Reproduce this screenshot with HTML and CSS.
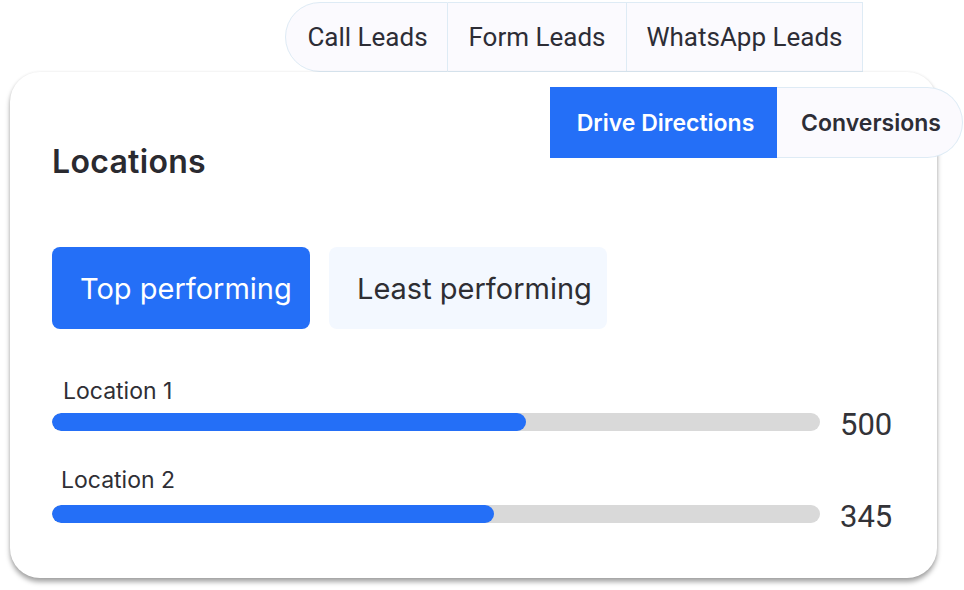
FILE: index.html
```html
<!DOCTYPE html>
<html>
<head>
<meta charset="utf-8">
<link rel="stylesheet" href="styles.css">
</head>
<body>
<div class="stage">
  <nav class="lead-tabs">
    <div class="lead-tab first">Call Leads</div>
    <div class="lead-tab">Form Leads</div>
    <div class="lead-tab">WhatsApp Leads</div>
  </nav>
  <section class="card">
    <div class="metric-tabs">
      <div class="metric-tab active">Drive Directions</div>
      <div class="metric-tab last">Conversions</div>
    </div>
    <h2 class="title">Locations</h2>
    <div class="filters">
      <button class="filter active">Top performing</button>
      <button class="filter">Least performing</button>
    </div>
    <div class="rows">
      <div class="row">
        <div class="label l1">Location 1</div>
        <div class="bar-line">
          <div class="track"><div class="fill" style="width:61.7%"></div></div>
          <div class="value">500</div>
        </div>
      </div>
      <div class="row">
        <div class="label">Location 2</div>
        <div class="bar-line">
          <div class="track"><div class="fill" style="width:57.6%"></div></div>
          <div class="value">345</div>
        </div>
      </div>
    </div>
  </section>
</div>
</body>
</html>
```

FILE: styles.css
```css
* { box-sizing: border-box; }
html, body { margin: 0; padding: 0; background: #ffffff; }
.stage {
  width: 964px;
  height: 590px;
  position: relative;
  overflow: hidden;
  padding-top: 2px;
}
.lead-tabs {
  display: flex;
  margin-left: 285px;
  height: 70px;
}
.lead-tab {
  display: flex;
  align-items: center;
  justify-content: center;
  background: #fbfafe;
  border: 1px solid #deebf5;
  border-left: none;
  font-family: Roboto, "Liberation Sans", sans-serif;
  font-size: 26px;
  color: #2d2d36;
  width: 179px;
}
.lead-tab.first {
  width: 163px;
  border-left: 1px solid #deebf5;
  border-radius: 35px 0 0 35px;
  padding-left: 2px;
}
.lead-tab:last-child { width: 236px; }

.card {
  position: relative;
  margin-left: 10px;
  width: 927px;
  height: 506px;
  background: #ffffff;
  border-radius: 30px;
  box-shadow: 0 4px 5px rgba(0, 0, 0, 0.35), 0 0 3px rgba(0, 0, 0, 0.08);
  padding: 0 0 0 42px;
}
.metric-tabs {
  position: absolute;
  top: 15px;
  left: 540px;
  display: flex;
  height: 71px;
}
.metric-tab {
  display: flex;
  align-items: center;
  justify-content: center;
  font-family: Inter, "Liberation Sans", sans-serif;
  font-weight: 600;
  font-size: 23px;
  color: #2d2d36;
}
.metric-tab.active {
  width: 227px;
  background: #246ff7;
  color: #ffffff;
  padding-left: 4px;
}
.metric-tab.last {
  width: 186px;
  background: #fbfafe;
  border: 1px solid #deebf5;
  border-left: none;
  border-radius: 0 36px 36px 0;
  padding-left: 3px;
}
.title {
  margin: 0;
  padding-top: 70px;
  height: 175px;
  font-family: Inter, "Liberation Sans", sans-serif;
  font-weight: 600;
  font-size: 32px;
  letter-spacing: 0.3px;
  color: #2a2a30;
  line-height: 40px;
}
.filters {
  display: flex;
  gap: 19px;
}
.filter {
  height: 82px;
  border: none;
  border-radius: 8px;
  font-family: Inter, "Liberation Sans", sans-serif;
  font-size: 29px;
  color: #2e2e33;
  background: #f3f8ff;
  padding: 0 0 0 28px;
  text-align: left;
  width: 278px;
}
.filter.active {
  width: 258px;
  background: #246ff7;
  color: #ffffff;
}
.rows {
  padding-top: 48px;
  display: flex;
  flex-direction: column;
  gap: 38px;
}
.label {
  font-family: Inter, "Liberation Sans", sans-serif;
  font-size: 23px;
  color: #2f2f35;
  padding-left: 9px;
  line-height: 28px;
  height: 36px;
}
.label.l1 { padding-left: 11px; }
.label:not(.l1) { line-height: 22px; }
.bar-line {
  display: flex;
  align-items: center;
  gap: 20px;
  height: 18px;
}
.track {
  width: 768px;
  height: 18px;
  border-radius: 9px;
  background: #d9d9d9;
  overflow: hidden;
}
.fill {
  height: 100%;
  background: #246ff7;
  border-radius: 9px;
}
.value {
  font-family: Roboto, "Liberation Sans", sans-serif;
  font-size: 31px;
  color: #333338;
  line-height: 30px;
  padding-top: 5px;
}
```
